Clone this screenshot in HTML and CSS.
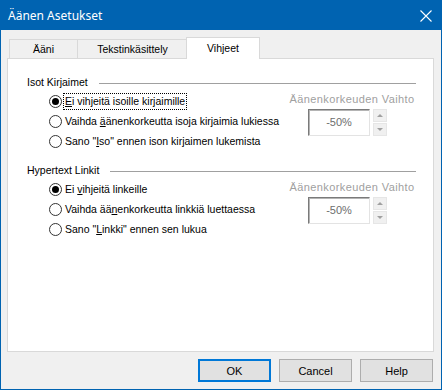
FILE: index.html
```html
<!DOCTYPE html>
<html lang="fi">

<head>
    <meta charset="UTF-8">
    <title>Äänen Asetukset</title>
    <link rel="stylesheet" href="styles.css">
</head>

<body>
    <div class="window">
        <div class="titlebar">
            <span class="title">Äänen Asetukset</span>
            <svg class="close" width="12" height="12" viewBox="0 0 12 12">
                <path d="M0.5 0.5 L11.5 11.5 M11.5 0.5 L0.5 11.5" stroke="#ffffff" stroke-width="1.1" fill="none" />
            </svg>
        </div>

        <div class="content">
            <div class="tabs">
                <div class="tab tab-sound">Ääni</div>
                <div class="tab tab-text">Tekstinkäsittely</div>
                <div class="tab tab-hints active">Vihjeet</div>
            </div>

            <div class="panel">
                <div class="group">
                    <div class="group-head">
                        <span>Isot Kirjaimet</span>
                        <span class="rule"></span>
                    </div>
                    <div class="group-body">
                        <div class="options">
                            <div class="option">
                                <span class="radio checked"></span>
                                <span class="label focus"><u>E</u>i vihjeitä isoille kirjaimille</span>
                            </div>
                            <div class="option">
                                <span class="radio"></span>
                                <span class="label">Vaihda <u>ä</u>änenkorkeutta isoja kirjaimia lukiessa</span>
                            </div>
                            <div class="option">
                                <span class="radio"></span>
                                <span class="label">Sano "<u>I</u>so" ennen ison kirjaimen lukemista</span>
                            </div>
                        </div>
                        <div class="pitch">
                            <div class="pitch-label">Äänenkorkeuden Vaihto</div>
                            <div class="spin">
                                <div class="spin-field">-50%</div>
                                <div class="spin-buttons">
                                    <span class="spin-btn"><span class="arrow up"></span></span>
                                    <span class="spin-btn"><span class="arrow down"></span></span>
                                </div>
                            </div>
                        </div>
                    </div>
                </div>

                <div class="group">
                    <div class="group-head">
                        <span>Hypertext Linkit</span>
                        <span class="rule"></span>
                    </div>
                    <div class="group-body">
                        <div class="options">
                            <div class="option">
                                <span class="radio checked"></span>
                                <span class="label">Ei <u>v</u>ihjeitä linkeille</span>
                            </div>
                            <div class="option">
                                <span class="radio"></span>
                                <span class="label">Vaihda ää<u>n</u>enkorkeutta linkkiä luettaessa</span>
                            </div>
                            <div class="option">
                                <span class="radio"></span>
                                <span class="label">Sano "<u>L</u>inkki" ennen sen lukua</span>
                            </div>
                        </div>
                        <div class="pitch">
                            <div class="pitch-label">Äänenkorkeuden Vaihto</div>
                            <div class="spin">
                                <div class="spin-field">-50%</div>
                                <div class="spin-buttons">
                                    <span class="spin-btn"><span class="arrow up"></span></span>
                                    <span class="spin-btn"><span class="arrow down"></span></span>
                                </div>
                            </div>
                        </div>
                    </div>
                </div>
            </div>

            <div class="buttons">
                <button class="btn default">OK</button>
                <button class="btn">Cancel</button>
                <button class="btn">Help</button>
            </div>
        </div>
    </div>
</body>

</html>
```

FILE: styles.css
```css
:root {
    --accent: #0063b1;
    --dialog: #f0f0f0;
    --panel: #ffffff;
    --panel-border: #d9d9d9;
    --rule: #a0a0a0;
    --disabled: #a0a0a0;
    --text: #000000;
}

html,
body {
    margin: 0;
    padding: 0;
    background: var(--dialog);
}

body {
    font-family: "Liberation Sans", Arial, sans-serif;
    font-size: 10.5px;
    color: var(--text);
    white-space: nowrap;
}

.window {
    width: 442px;
    height: 390px;
    box-sizing: border-box;
    border: 1px solid var(--accent);
    border-top: 0;
    background: var(--dialog);
    display: flex;
    flex-direction: column;
}

.titlebar {
    height: 30px;
    flex: none;
    background: var(--accent);
    color: #ffffff;
    display: flex;
    align-items: center;
    justify-content: space-between;
    padding: 0 9px 0 7px;
}

.title {
    font-family: "Noto Sans", sans-serif;
    font-size: 12px;
    padding-top: 1px;
}

.close {
    display: block;
    margin-top: 1px;
}

.content {
    padding: 7px 7px 0 6px;
}

/* tabs */

.tabs {
    display: flex;
    align-items: flex-end;
    height: 21px;
    margin-left: 2px;
    position: relative;
    z-index: 1;
}

.tab {
    box-sizing: border-box;
    height: 19px;
    line-height: 18px;
    text-align: center;
    background: var(--dialog);
    border: 1px solid var(--panel-border);
    border-bottom: 0;
}

.tab-sound {
    width: 69px;
}

.tab-text {
    width: 110px;
    border-left: 0;
}

.tab-hints {
    width: 74px;
    margin-left: -2px;
}

.tab.active {
    height: 22px;
    line-height: 21px;
    margin-bottom: -1px;
    background: var(--panel);
}

/* panel */

.panel {
    box-sizing: border-box;
    height: 294px;
    background: var(--panel);
    border: 1px solid var(--panel-border);
    padding: 17px 17px 0 19px;
}

.group+.group {
    margin-top: 13px;
}

.group-head {
    display: flex;
    align-items: center;
    height: 13px;
    line-height: 13px;
}

.rule {
    flex: 1;
    height: 1px;
    margin-left: 11px;
    margin-top: 1px;
    background: var(--rule);
}

.group-body {
    display: flex;
    justify-content: space-between;
    margin-top: 2px;
}

.options {
    margin-left: 22px;
}

.option {
    display: flex;
    align-items: center;
    height: 20px;
}

.radio {
    flex: none;
    width: 13px;
    height: 13px;
    box-sizing: border-box;
    border: 1px solid #333333;
    border-radius: 50%;
    background: #ffffff;
    margin-right: 1px;
    display: flex;
    align-items: center;
    justify-content: center;
}

.radio.checked:after {
    content: "";
    width: 7px;
    height: 7px;
    border-radius: 50%;
    background: #000000;
}

.label {
    padding: 1px 1px;
    border: 1px dotted transparent;
    line-height: 13px;
}

.label.focus {
    border-color: #000000;
}

/* pitch spinner */

.pitch {
    flex: none;
    width: 128px;
    padding-top: 1px;
}

.pitch-label {
    color: var(--disabled);
    font-size: 11px;
    letter-spacing: 0.4px;
    line-height: 14px;
    text-align: center;
}

.spin {
    display: flex;
    margin-top: 3px;
    margin-left: 20px;
}

.spin-field {
    box-sizing: border-box;
    width: 62px;
    height: 27px;
    line-height: 25px;
    font-size: 11px;
    text-align: center;
    color: #6d6d6d;
    background: #ffffff;
    border: 1px solid #e3e3e3;
    border-top-color: #7a7a7a;
    border-left-color: #7a7a7a;
    box-shadow: inset 1px 1px 0 #b4b4b4;
}

.spin-buttons {
    display: flex;
    flex-direction: column;
    margin-left: 3px;
}

.spin-btn {
    box-sizing: border-box;
    width: 14px;
    height: 13px;
    background: #f0f0f0;
    border: 1px solid #e6e6e6;
    display: flex;
    align-items: center;
    justify-content: center;
}

.spin-btn+.spin-btn {
    margin-top: 1px;
}

.arrow {
    width: 0;
    height: 0;
    border-left: 3px solid transparent;
    border-right: 3px solid transparent;
}

.arrow.up {
    border-bottom: 3px solid #a0a0a0;
}

.arrow.down {
    border-top: 3px solid #a0a0a0;
}

/* dialog buttons */

.buttons {
    display: flex;
    justify-content: flex-end;
    gap: 8px;
    margin-top: 7px;
    padding-right: 1px;
}

.btn {
    width: 73px;
    height: 23px;
    padding: 0;
    font-family: "Liberation Sans", Arial, sans-serif;
    font-size: 11px;
    color: var(--text);
    background: #e1e1e1;
    border: 1px solid #adadad;
}

.btn.default {
    border-color: #0078d7;
    box-shadow: inset 0 0 0 1px #0078d7;
}
```
